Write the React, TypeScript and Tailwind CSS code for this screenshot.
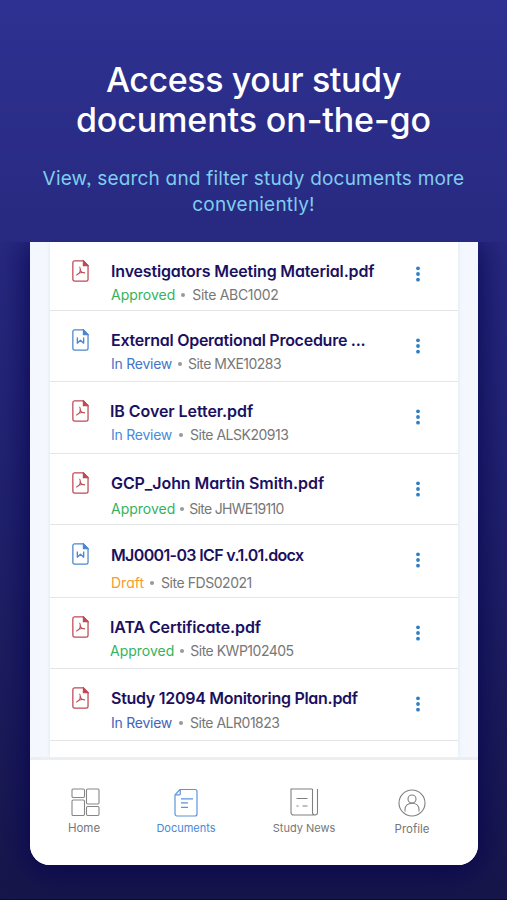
import type { ReactNode } from "react";
import clsx from "clsx";

interface StudyDocument {
  title: string;
  type: "pdf" | "word";
  status: string;
  statusClass: string;
  site: string;
  // spacing differs slightly from row to row
  rowClass: string;
  titleClass: string;
  metaClass: string;
  siteClass: string;
}

const documents: StudyDocument[] = [
  {
    title: "Investigators Meeting Material.pdf",
    type: "pdf",
    status: "Approved",
    statusClass: "text-[#35b25c]",
    site: "Site ABC1002",
    rowClass: "h-[69px]",
    titleClass: "tracking-[-0.16px]",
    metaClass: "mt-[4px] gap-[6px]",
    siteClass: "ml-px tracking-[-0.3px]",
  },
  {
    title: "External Operational Procedure ...",
    type: "word",
    status: "In Review",
    statusClass: "tracking-[-0.25px] text-[#4475c9]",
    site: "Site MXE10283",
    rowClass: "h-[71px]",
    titleClass: "tracking-[-0.26px]",
    metaClass: "mt-[4px] gap-[6px]",
    siteClass: "tracking-[-0.53px]",
  },
  {
    title: "IB Cover Letter.pdf",
    type: "pdf",
    status: "In Review",
    statusClass: "tracking-[-0.25px] text-[#4a8ad8]",
    site: "Site ALSK20913",
    rowClass: "h-[72px]",
    titleClass: "-ml-px tracking-[-0.07px]",
    metaClass: "mt-[3px] gap-[7px]",
    siteClass: "pt-px tracking-[-0.5px]",
  },
  {
    title: "GCP_John Martin Smith.pdf",
    type: "pdf",
    status: "Approved",
    statusClass: "text-[#35b25c]",
    site: "Site JHWE19110",
    rowClass: "h-[71px]",
    titleClass: "tracking-[-0.08px]",
    metaClass: "mt-[5px] gap-[5px]",
    siteClass: "pt-px tracking-[-0.7px]",
  },
  {
    title: "MJ0001-03 ICF v.1.01.docx",
    type: "word",
    status: "Draft",
    statusClass: "text-[#f99a2b]",
    site: "Site FDS02021",
    rowClass: "h-[73px]",
    titleClass: "pt-px tracking-[-0.64px]",
    metaClass: "mt-[7px] gap-[6px]",
    siteClass: "ml-px pt-px tracking-[-0.45px]",
  },
  {
    title: "IATA Certificate.pdf",
    type: "pdf",
    status: "Approved",
    statusClass: "-ml-px text-[#35b25c]",
    site: "Site KWP102405",
    rowClass: "h-[71px]",
    titleClass: "-ml-px tracking-[-0.12px]",
    metaClass: "mt-[4px] gap-[6px]",
    siteClass: "tracking-[-0.5px]",
  },
  {
    title: "Study 12094 Monitoring Plan.pdf",
    type: "pdf",
    status: "In Review",
    statusClass: "tracking-[-0.25px] text-[#4464b8]",
    site: "Site ALR01823",
    rowClass: "h-[72px]",
    titleClass: "tracking-[-0.28px]",
    metaClass: "mt-[5px] gap-[7px]",
    siteClass: "tracking-[-0.5px]",
  },
];

function FileIcon({ type }: { type: StudyDocument["type"] }) {
  const color = type === "pdf" ? "#bd4a54" : "#4c86cc";
  return (
    <svg width="17" height="22" viewBox="0 0 16 21" fill="none" stroke={color} strokeWidth="1.2">
      <path d="M2.2.8h8.5l4.5 4.7v12.8a1.8 1.8 0 0 1-1.8 1.8H2.4A1.7 1.7 0 0 1 .7 18.4V2.4A1.6 1.6 0 0 1 2.2.8Z" />
      <path d="M10.8.9v4.5h4.3Z" fill={color} />
      {type === "pdf" ? (
        <path
          d="M7.3 6.8c.9 1.800.7 3.200.2 4.300-.6 1.400-1.700 2.900-3.200 3.300M4.300 14.400c.8-1.300 2-2 3.700-2.300 1.500-.3 2.800-.3 4 .200M7.500 9.600c.9 1.600 2.200 2.800 4.500 2.700"
          strokeWidth="1"
          strokeLinecap="round"
        />
      ) : (
        <path d="M5 8.200v5.300l3-2.700 3 2.700V8.200" strokeWidth="1.300" strokeLinejoin="round" />
      )}
    </svg>
  );
}

function MoreDots() {
  return (
    <svg width="6" height="16" viewBox="0 0 6 16" fill="#307fc4">
      <circle cx="3" cy="2.300" r="1.900" />
      <circle cx="3" cy="8" r="1.900" />
      <circle cx="3" cy="13.700" r="1.900" />
    </svg>
  );
}

function DocumentRow({ doc, first }: { doc: StudyDocument; first: boolean }) {
  return (
    <li className={clsx("flex border-b border-[#e4e5e8] pl-[22px]", doc.rowClass)}>
      <div className="w-[39px] shrink-0 pt-[18px]">
        <FileIcon type={doc.type} />
      </div>
      <div className="flex-1 pt-[19px] whitespace-nowrap">
        <h2 className={clsx("text-[16px] leading-5 font-semibold text-[#1b1060]", doc.titleClass)}>{doc.title}</h2>
        <div className={clsx("flex items-center text-[14px] leading-5", doc.metaClass)}>
          <span className={doc.statusClass}>{doc.status}</span>
          <span className="size-[4px] rounded-full bg-[#999]" />
          <span className={clsx("text-[#777]", doc.siteClass)}>{doc.site}</span>
        </div>
      </div>
      <div className={clsx("w-[43px] shrink-0", first ? "pt-[24px]" : "pt-[27px]")}>
        <MoreDots />
      </div>
    </li>
  );
}

function NavItem({ label, className, children }: { label: string; className: string; children: ReactNode }) {
  return (
    <button className={clsx("flex flex-col items-center whitespace-nowrap", className)}>
      {children}
      <span className="leading-4">{label}</span>
    </button>
  );
}

function BottomNav() {
  return (
    <nav className="flex h-[105px] items-start bg-white text-[11px] text-[#777]">
      <NavItem label="Home" className="ml-[24px] w-[60px] gap-[3px] pt-[28px] text-[11.5px]">
        <svg className="ml-[2px]" width="29" height="29" viewBox="0 0 29 29" fill="none" stroke="#858585" strokeWidth="1.100">
          <rect x="1" y="1" width="12.500" height="8.500" rx="1.200" />
          <rect x="15.500" y="1" width="12.500" height="15" rx="1.200" />
          <rect x="1" y="12" width="12.500" height="15.500" rx="1.200" />
          <rect x="15.500" y="18.500" width="12.500" height="9" rx="1.200" />
        </svg>
      </NavItem>
      <NavItem label="Documents" className="ml-[37px] w-[70px] gap-[3px] pt-[28px] text-[#4889d6]">
        <svg width="24" height="29" viewBox="0 0 24 29" fill="none" stroke="#5b94da" strokeWidth="1.200">
          <path d="M6 1.500h15a2 2 0 0 1 2 2v22.500a2 2 0 0 1-2 2H3a2 2 0 0 1-2-2V6.800Z" strokeLinejoin="round" />
          <path d="M6.200 1.700v4.200a1 1 0 0 1-1 1H1.300M7 10.800h12M7 14.800h7M7 19.300h7" />
        </svg>
      </NavItem>
      <NavItem label="Study News" className="ml-[48px] w-[70px] gap-[3px] pt-[28px]">
        <svg className="ml-px" width="29" height="29" viewBox="0 0 29 29" fill="none" stroke="#808080" strokeWidth="1.100">
          <path d="M22.500 1H1v23.500a2.500 2.500 0 0 0 2.500 2.500H25a2.500 2.500 0 0 0 2.500-2.500V1M22.500 1v23.500a2.500 2.500 0 0 0 2.500 2.500" />
          <path d="M6.500 10.500h11M6.500 18h2M12.500 18h5" />
        </svg>
      </NavItem>
      <NavItem label="Profile" className="ml-[43px] w-[60px] gap-[3px] pt-[29px] text-[11.5px]">
        <svg width="28" height="29" viewBox="0 0 28 29" fill="none" stroke="#808080" strokeWidth="1.100">
          <circle cx="14" cy="14" r="13" />
          <circle cx="14" cy="10" r="4" />
          <path d="M7 22.500v-2c0-3.800 3-6.300 7-6.300s7 2.500 7 6.300v2" />
        </svg>
      </NavItem>
    </nav>
  );
}

export default function App() {
  return (
    <main className="flex h-[900px] w-[507px] flex-col overflow-hidden border-b border-[#0c0c30] bg-linear-to-b from-[#2e3191] via-[#222372] via-50% to-[#17164a] font-['Inter','Noto_Sans',sans-serif] [font-feature-settings:'cv11','ss03']">
      <header className="h-[242px] shrink-0 pt-[60px] text-center">
        <h1 className="text-[34px] leading-[40px] font-medium text-white">
          <span className="tracking-[-0.4px]">Access your study</span>
          <br />
          <span className="tracking-[-0.1px]">documents on-the-go</span>
        </h1>
        <p className="mt-[26px] text-[19px] leading-[26px] tracking-[0.2px] text-[#7fcdf0]">
          View, search and filter study documents more
          <br />
          conveniently!
        </p>
      </header>

      <section className="flex-1 overflow-hidden px-[30px]">
        <div className="h-[623px] w-[448px] overflow-hidden rounded-b-[20px] bg-[#f4f8fe] shadow-[0_4px_30px_4px_#06044dcc]">
          <div className="h-[518px] overflow-hidden border-b-[3px] border-[#eceff2] px-[20px]">
            <ul className="h-[515px] bg-white shadow-[0_0_4px_#d3e8ec]">
              {documents.map((doc, index) => (
                <DocumentRow key={doc.title} doc={doc} first={index === 0} />
              ))}
            </ul>
          </div>
          <BottomNav />
        </div>
      </section>
    </main>
  );
}
